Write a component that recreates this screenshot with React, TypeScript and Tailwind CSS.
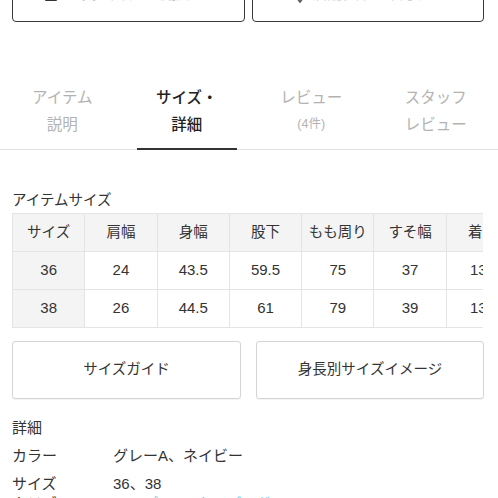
import React from "react";

const F = { fontFamily: '"Liberation Sans", "Noto Sans CJK JP", sans-serif' };

const headers = ["サイズ", "肩幅", "身幅", "股下", "もも周り", "すそ幅", "着丈"];
const rows = [
  ["36", "24", "43.5", "59.5", "75", "37", "132"],
  ["38", "26", "44.5", "61", "79", "39", "134"],
];

export default function App() {
  return (
    <div className="w-[498px] h-[498px] overflow-hidden bg-white text-[#333]" style={F}>
      {/* top buttons (cut off) */}
      <div className="-mt-[26px] flex gap-[7px] px-[12px]">
        <div className="flex h-[48px] w-[233px] items-center gap-[8px] rounded-[4px] border border-[#3a3a3a] pb-[7px] pl-[30px]">
          <svg width="16" height="16" viewBox="0 0 16 16">
            <rect x="2" y="3" width="12" height="11" rx="1" fill="#333" />
          </svg>
          <span className="text-[14.5px] text-[#c4c4c4]">お気に入りに追加する</span>
        </div>
        <div className="flex h-[48px] w-[232px] items-center justify-center gap-[6px] rounded-[4px] border border-[#3a3a3a] pb-[7px]">
          <svg width="14" height="18" viewBox="0 0 14 18">
            <path d="M7 1a5 5 0 0 0-5 5c0 4 5 10 5 10s5-6 5-10a5 5 0 0 0-5-5z" fill="none" stroke="#555" strokeWidth="1.6" />
          </svg>
          <span className="text-[14.5px] text-[#d0d0d0]">店舗在庫を確認する</span>
        </div>
      </div>

      {/* tabs */}
      <div className="relative flex border-b border-[#e2e2e2] pt-[62px] pb-[11px]">
        {[
          ["アイテム", "説明", false],
          ["サイズ・", "詳細", true],
          ["レビュー", "(4件)", false],
          ["スタッフ", "レビュー", false],
        ].map(([a, b, active], i) => (
          <div key={i} className="relative flex flex-1 flex-col items-center">
            <span className={`text-[15.5px] leading-[27px] ${active ? "text-[#222] font-medium" : "text-[#b3b3b3]"}`}>{a as string}</span>
            <span
              className={`leading-[27px] ${active ? "text-[15.5px] text-[#222] font-medium" : "text-[#b3b3b3]"} ${i === 2 ? "text-[12.5px]" : "text-[15.5px]"}`}
            >
              {b as string}
            </span>
            {active && <div className="absolute -bottom-[12px] left-[12px] h-[2px] w-[100px] bg-[#333]" />}
          </div>
        ))}
      </div>

      {/* item size */}
      <div className="px-[12px] pt-[40px]">
        <div className="text-[14.5px] leading-[20px] text-[#333]">アイテムサイズ</div>
        <div className="mt-[3px] w-[471px] overflow-hidden">
          <table className="w-[506px] table-fixed border-collapse text-center text-[14.5px] text-[#333]">
            <tbody>
              <tr className="h-[38px] bg-[#f4f4f4]">
                {headers.map((h) => (
                  <td key={h} className="w-[72.3px] whitespace-nowrap border border-[#e4e4e4] p-0">
                    {h}
                  </td>
                ))}
              </tr>
              {rows.map((r, ri) => (
                <tr key={ri} className="h-[38px]">
                  {r.map((c, ci) => (
                    <td
                      key={ci}
                      className={`whitespace-nowrap border border-[#e4e4e4] p-0 text-[15px] ${ci === 0 ? "bg-[#f4f4f4]" : "bg-white"}`}
                    >
                      {c}
                    </td>
                  ))}
                </tr>
              ))}
            </tbody>
          </table>
        </div>

        {/* buttons */}
        <div className="mt-[13px] flex gap-[15px]">
          <div className="flex h-[58px] w-[229px] items-center justify-center rounded-[3px] border border-[#d4d4d4] text-[14.5px] shadow-[0_1px_1px_rgba(0,0,0,0.05)]">
            サイズガイド
          </div>
          <div className="flex h-[58px] w-[228px] items-center justify-center rounded-[3px] border border-[#d4d4d4] text-[14.5px] shadow-[0_1px_1px_rgba(0,0,0,0.05)]">
            身長別サイズイメージ
          </div>
        </div>

        {/* details */}
        <div className="mt-[15px] text-[15px] leading-[28px]">
          <div>詳細</div>
          <div className="flex">
            <span className="w-[101px]">カラー</span>
            <span>グレーA、ネイビー</span>
          </div>
          <div className="flex">
            <span className="w-[101px]">サイズ</span>
            <span>36、38</span>
          </div>
          <div className="-mt-[8px] flex">
            <span className="w-[101px]">カテゴリー</span>
            <span className="text-[#7cc0dc]">トップス ＞ カーディガン ＞ ニット</span>
          </div>
        </div>
      </div>
    </div>
  );
}
